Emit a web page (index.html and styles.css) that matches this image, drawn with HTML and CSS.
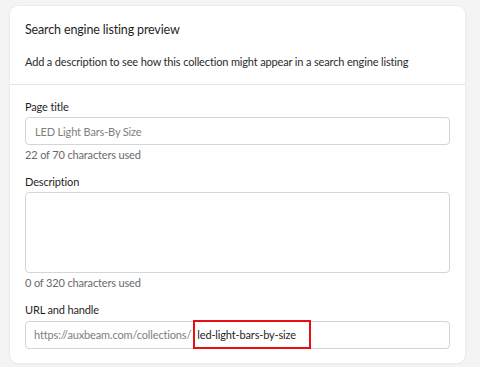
FILE: index.html
```html
<!DOCTYPE html>
<html lang="en">
<head>
    <meta charset="UTF-8">
    <title>Search engine listing preview</title>
    <link rel="stylesheet" href="styles.css">
</head>
<body>
    <div class="card">
        <div class="card-head">
            <h2>Search engine listing preview</h2>
            <p>Add a description to see how this collection might appear in a search engine listing</p>
        </div>
        <div class="card-body">
            <div class="field">
                <label for="pageTitle">Page title</label>
                <input id="pageTitle" type="text" placeholder="LED Light Bars-By Size">
                <div class="hint">22 of 70 characters used</div>
            </div>
            <div class="field">
                <label for="desc">Description</label>
                <textarea id="desc"></textarea>
                <div class="hint">0 of 320 characters used</div>
            </div>
            <div class="field">
                <label for="handle">URL and handle</label>
                <div class="url-input">
                    <span class="prefix">https://auxbeam.com/collections/</span>
                    <span class="handle">led-light-bars-by-size</span>
                </div>
            </div>
        </div>
    </div>
</body>
</html>
```

FILE: styles.css
```css
body, html {
    margin: 0;
    background: #f4f4f4;
    font-family: 'Lato', 'Noto Sans', sans-serif;
    color: #212b36;
}
body {
    padding: 6px 15px 5px 10px;
}
.card {
    background: #fff;
    border-radius: 8px;
    box-shadow: 0 0 0 1px #ececec, 0 1px 2px rgba(0, 0, 0, 0.08);
}
.card-head {
    padding: 15px 15px 14px;
    border-bottom: 1px solid #e4e4e4;
}
h2 {
    margin: 0;
    font-size: 12.5px;
    letter-spacing: -0.15px;
    font-weight: 400;
    line-height: 18px;
    color: #1f1f1f;
}
.card-head p {
    margin: 15px 0 0;
    font-size: 11px;
    letter-spacing: -0.15px;
    line-height: 16px;
    color: #2b2b2b;
}
.card-body {
    padding: 14px 15px 14px;
}
.field {
    margin-bottom: 11px;
}
.field:last-child {
    margin-bottom: 0;
}
label {
    display: block;
    font-size: 11px;
    letter-spacing: -0.15px;
    line-height: 16px;
    color: #1f1f1f;
    margin-bottom: 2px;
}
input, textarea, .url-input {
    display: block;
    box-sizing: border-box;
    width: 100%;
    border: 1px solid #d5d5d5;
    border-radius: 4px;
    background: #fff;
    font-family: inherit;
    font-size: 11px;
    letter-spacing: -0.15px;
    margin: 0;
}
input {
    height: 28px;
    padding: 0 9px;
}
input::placeholder {
    color: #7e7e7e;
}
textarea {
    height: 81px;
    resize: none;
}
.hint {
    font-size: 11px;
    letter-spacing: -0.15px;
    line-height: 16px;
    color: #666a6e;
    margin-top: 2px;
}
.url-input {
    height: 28px;
    display: flex;
    align-items: stretch;
    padding-left: 8px;
    margin-top: 3px;
}
.prefix {
    color: #7e7e7e;
    line-height: 26px;
}
.handle {
    margin: -2px 0 -1px 2px;
    padding: 0 2px;
    line-height: 25px;
    color: #1f1f1f;
    border: 2px solid #e81010;
    width: 118px;
    box-sizing: border-box;
}
```
